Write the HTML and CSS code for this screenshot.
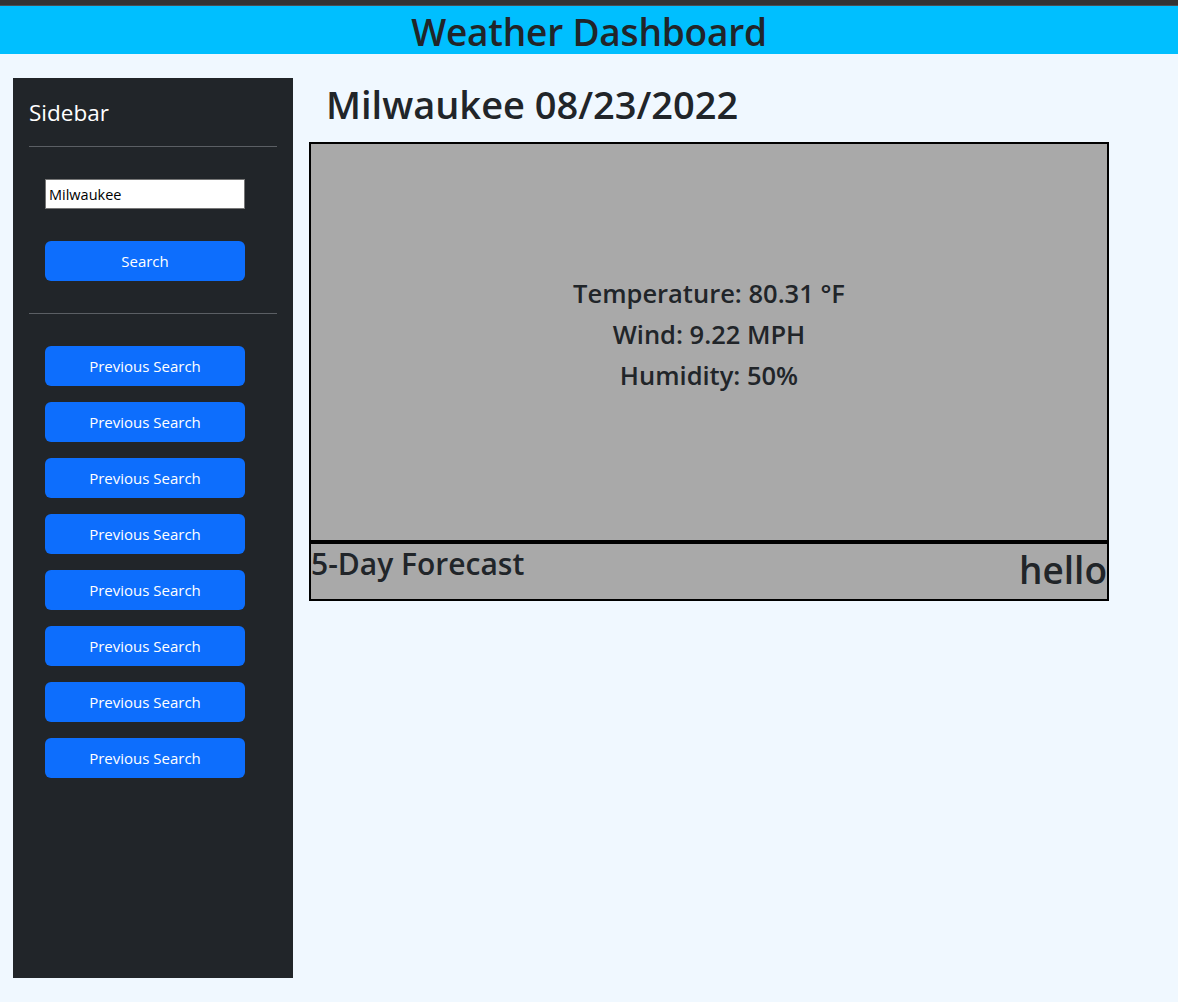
FILE: index.html
```html
<!DOCTYPE html>
<html lang="en">
<head>
<meta charset="utf-8">
<title>Weather Dashboard</title>
<link rel="stylesheet" href="styles.css">
</head>
<body>
<header class="topbar">
  <h1 class="site-title">Weather Dashboard</h1>
</header>
<div class="layout">
  <aside class="sidebar">
    <div class="sidebar-title">Sidebar</div>
    <hr class="rule">
    <div class="search-area">
      <input class="city-input" type="text" value="Milwaukee">
      <button class="btn">Search</button>
    </div>
    <hr class="rule rule-flush">
    <div class="history">
      <button class="btn">Previous Search</button>
      <button class="btn">Previous Search</button>
      <button class="btn">Previous Search</button>
      <button class="btn">Previous Search</button>
      <button class="btn">Previous Search</button>
      <button class="btn">Previous Search</button>
      <button class="btn">Previous Search</button>
      <button class="btn">Previous Search</button>
    </div>
  </aside>
  <main class="main">
    <h1 class="city-title">Milwaukee 08/23/2022</h1>
    <section class="current">
      <h3 class="stat">Temperature: 80.31 °F</h3>
      <h3 class="stat">Wind: 9.22 MPH</h3>
      <h3 class="stat">Humidity: 50%</h3>
    </section>
    <section class="forecast">
      <h3 class="forecast-title">5-Day Forecast</h3>
      <h1 class="forecast-hello">hello</h1>
    </section>
  </main>
</div>
</body>
</html>
```
FILE: styles.css
```css
* { box-sizing: border-box; }
html, body { margin: 0; padding: 0; }
body {
  background: #f0f8ff;
  font-family: "Open Sans", "Noto Sans", sans-serif;
  color: #212529;
  height: 1002px;
  overflow: hidden;
}
.topbar {
  background: #00bfff;
  border-top: 5px solid #333333;
  box-shadow: inset 0 1px 0 #4a4f55;
  height: 54px;
  display: flex;
  justify-content: center;
  align-items: center;
}
.site-title {
  margin: 0;
  padding-top: 5px;
  font-size: 37px;
  font-weight: 600;
  line-height: 44px;
  color: #212529;
  letter-spacing: -0.2px;
}
.layout {
  display: flex;
  padding: 24px 0 0 13px;
  gap: 16px;
}
.sidebar {
  width: 280px;
  height: 900px;
  background: #212529;
  padding: 21px 16px 16px;
  flex-shrink: 0;
}
.sidebar-title {
  color: #ffffff;
  font-size: 22.5px;
  line-height: 28px;
}
.rule {
  border: 0;
  border-top: 1px solid #5b5f64;
  margin: 19px 0 0;
}
.rule-flush { margin-top: 0; }
.search-area {
  padding: 32px 16px 32px;
  display: flex;
  flex-direction: column;
  gap: 32px;
}
.city-input {
  width: 200px;
  height: 30px;
  margin: 0;
  border: 1px solid #767676;
  padding: 1px 3px;
  font-family: "Open Sans", sans-serif;
  font-size: 14.5px;
  color: #000;
  background: #fff;
}
.btn {
  width: 200px;
  height: 40px;
  border: 0;
  border-radius: 6px;
  background: #0d6efd;
  color: #ffffff;
  font-family: "Open Sans", sans-serif;
  font-size: 15px;
  padding: 0;
}
.history {
  padding: 32px 16px 0;
  display: flex;
  flex-direction: column;
  gap: 16px;
}
.main {
  width: 800px;
  display: flex;
  flex-direction: column;
}
.city-title {
  margin: 2px 0 14px 17px;
  font-size: 38px;
  font-weight: 600;
  line-height: 48px;
}
.current {
  height: 400px;
  background: #a9a9a9;
  border: 2px solid #000;
  padding-bottom: 10px;
  display: flex;
  flex-direction: column;
  justify-content: center;
  align-items: center;
}
.stat {
  margin: 0 0 7px;
  font-size: 25.5px;
  font-weight: 600;
  line-height: 34px;
}
.forecast {
  height: 59px;
  background: #a9a9a9;
  border: 2px solid #000;
  display: flex;
  justify-content: space-between;
  align-items: flex-start;
}
.forecast-title {
  margin: 0;
  font-size: 30px;
  font-weight: 600;
  line-height: 40px;
}
.forecast-hello {
  margin: 0;
  font-size: 37px;
  font-weight: 600;
  line-height: 52px;
}
```
